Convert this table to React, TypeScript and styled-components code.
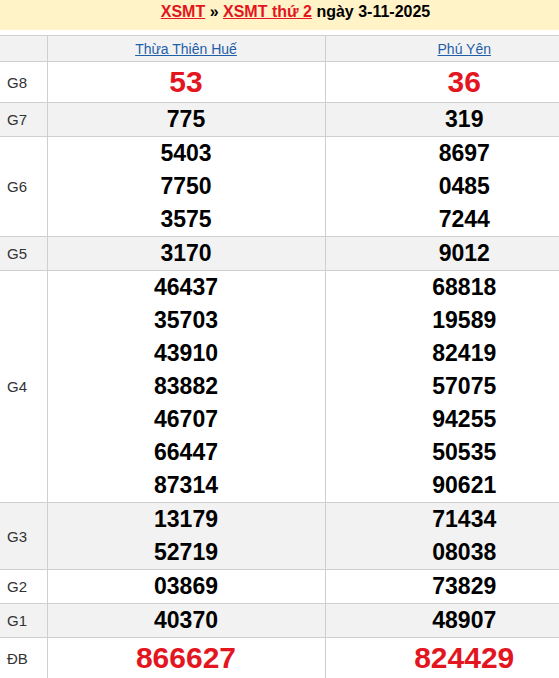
import styled, { createGlobalStyle } from 'styled-components';

type Prize = {
  label: string;
  shade?: boolean;
  big?: boolean;
  values: [string[], string[]];
};

const prizes: Prize[] = [
  { label: 'G8', big: true, values: [['53'], ['36']] },
  { label: 'G7', shade: true, values: [['775'], ['319']] },
  {
    label: 'G6',
    values: [
      ['5403', '7750', '3575'],
      ['8697', '0485', '7244'],
    ],
  },
  { label: 'G5', shade: true, values: [['3170'], ['9012']] },
  {
    label: 'G4',
    values: [
      ['46437', '35703', '43910', '83882', '46707', '66447', '87314'],
      ['68818', '19589', '82419', '57075', '94255', '50535', '90621'],
    ],
  },
  {
    label: 'G3',
    shade: true,
    values: [
      ['13179', '52719'],
      ['71434', '08038'],
    ],
  },
  { label: 'G2', values: [['03869'], ['73829']] },
  { label: 'G1', shade: true, values: [['40370'], ['48907']] },
  { label: 'ĐB', big: true, values: [['866627'], ['824429']] },
];

const provinces = ['Thừa Thiên Huế', 'Phú Yên'];

const App = () => {
  return (
    <>
      <GlobalStyle />
      <Page>
        <TitleBar>
          <RedLink href="#">XSMT</RedLink> » <RedLink href="#">XSMT thứ 2</RedLink> ngày
          3-11-2025
        </TitleBar>
        <Results>
          <colgroup>
            <LabelCol />
            <ProvinceCol />
            <ProvinceCol />
          </colgroup>
          <thead>
            <tr>
              <HeadCell />
              {provinces.map((p) => (
                <HeadCell key={p}>
                  <ProvinceLink href="#">{p}</ProvinceLink>
                </HeadCell>
              ))}
            </tr>
          </thead>
          <tbody>
            {prizes.map((row) => (
              <Row key={row.label} $shade={!!row.shade}>
                <Label>{row.label}</Label>
                {row.values.map((col, i) => (
                  <NumCell key={i}>
                    {col.map((n) => (
                      <Num key={n} $big={!!row.big}>
                        {n}
                      </Num>
                    ))}
                  </NumCell>
                ))}
              </Row>
            ))}
          </tbody>
        </Results>
      </Page>
    </>
  );
};

const GlobalStyle = createGlobalStyle`
  html, body {
    margin: 0;
    padding: 0;
    overflow: hidden;
    background: #ffffff;
    font-family: "Liberation Sans", Arial, sans-serif;
  }
`;

// the results table is wider than the window, its last column is cut off
const Page = styled.div`
  width: 603px;
  display: flex;
  flex-direction: column;
  gap: 5px;
`;

const TitleBar = styled.div`
  height: 30px;
  line-height: 24px;
  background: #fff3c7;
  text-align: center;
  font-size: 16px;
  font-weight: bold;
  color: #000;
  text-indent: -12px;
`;

const RedLink = styled.a`
  color: #e3161f;
  text-decoration: underline;
`;

const Results = styled.table`
  width: 603px;
  border-collapse: collapse;
  table-layout: fixed;
`;

const LabelCol = styled.col`
  width: 47px;
`;

const ProvinceCol = styled.col`
  width: 278px;
`;

const HeadCell = styled.th`
  height: 25px;
  background: #f2f2f2;
  border-top: 1px solid #cfcfcf;
  border-bottom: 1px solid #cfcfcf;
  border-left: 1px solid #cfcfcf;
  padding: 0;
  font-size: 14px;
  font-weight: normal;
  text-align: center;
  &:first-child {
    border-left: none;
  }
`;

const ProvinceLink = styled.a`
  color: #1f5ea8;
  text-decoration: underline;
`;

const Row = styled.tr<{ $shade: boolean }>`
  background: ${({ $shade }) => ($shade ? '#f2f2f2' : '#ffffff')};
  & > td {
    border-bottom: 1px solid #cfcfcf;
    border-left: 1px solid #cfcfcf;
  }
  & > td:first-child {
    border-left: none;
  }
`;

const Label = styled.td`
  padding: 0 0 0 7px;
  font-size: 15px;
  color: #333;
`;

const NumCell = styled.td`
  padding: 0;
  text-align: center;
`;

const Num = styled.div<{ $big: boolean }>`
  font-weight: bold;
  font-size: ${({ $big }) => ($big ? '30px' : '23px')};
  line-height: ${({ $big }) => ($big ? '40px' : '33px')};
  color: ${({ $big }) => ($big ? '#e3161f' : '#000')};
`;

export default App;
